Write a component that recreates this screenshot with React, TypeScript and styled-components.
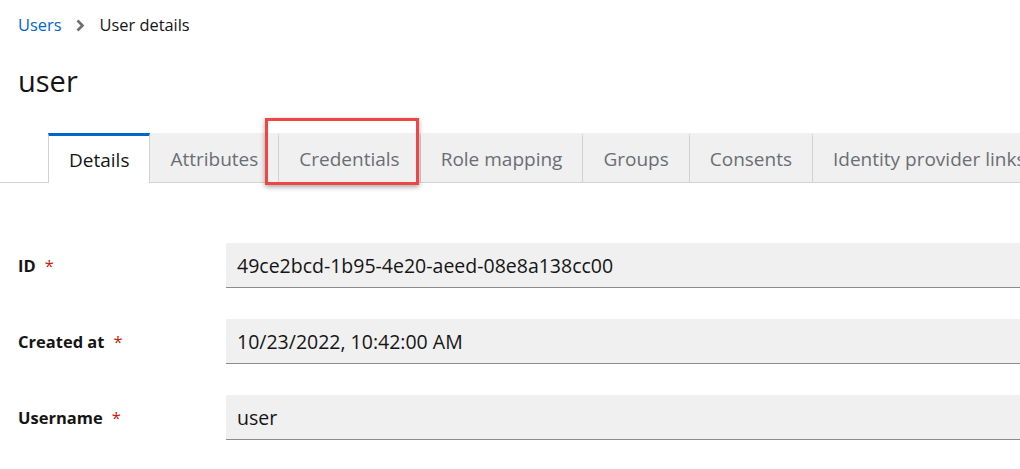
import React from "react";
import styled, { createGlobalStyle } from "styled-components";

const Global = createGlobalStyle`
  html, body { margin: 0; padding: 0; background: #fff; }
  body { font-family: "Open Sans", "Noto Sans", sans-serif; color: #151515; overflow: hidden; }
  * { box-sizing: border-box; }
`;

const Page = styled.div`
  width: 1020px;
  height: 469px;
  overflow: hidden;
`;

const Header = styled.div`
  padding: 12px 18px 0;
`;

const Breadcrumb = styled.nav`
  display: flex;
  align-items: center;
  font-size: 16.4px;
  line-height: 26px;
`;

const Crumb = styled.a`
  color: #0066cc;
  text-decoration: none;
`;

const Sep = styled.span`
  display: inline-flex;
  margin: 0 14px 0 15px;
  color: #6a6e73;
`;

const Current = styled.span`
  color: #151515;
`;

const Title = styled.h1`
  margin: 24px 0 0;
  font-size: 29px;
  font-weight: 400;
  line-height: 38px;
`;

const TabBar = styled.div`
  margin-top: 33px;
  display: flex;
  padding-left: 48px;
  border-bottom: 1px solid #d2d2d2;
  height: 50px;
  white-space: nowrap;
`;

const Tab = styled.div<{ $active?: boolean }>`
  position: relative;
  display: flex;
  align-items: center;
  padding: 0 20px;
  font-size: 19px;
  height: ${(p) => (p.$active ? "50px" : "49px")};
  background: ${(p) => (p.$active ? "#fff" : "#f0f0f0")};
  color: ${(p) => (p.$active ? "#151515" : "#6a6e73")};
  border-top: 3px solid ${(p) => (p.$active ? "#0066cc" : "#f0f0f0")};
  border-left: ${(p) => (p.$active ? "1px solid #d2d2d2" : "none")};
  border-right: 1px solid #d2d2d2;
  flex-shrink: 0;
`;

const Highlight = styled.div`
  position: absolute;
  left: -14px;
  right: 1px;
  top: -18px;
  bottom: -3px;
  border: 3px solid #f04545;
  box-shadow: 0 2px 5px rgba(0, 0, 0, 0.35);
  pointer-events: none;
`;

const Form = styled.div`
  margin-top: 60px;
  display: grid;
  grid-template-columns: 208px 1fr;
  row-gap: 31px;
  padding-left: 18px;
`;

const Label = styled.label`
  display: flex;
  align-items: center;
  font-size: 16.5px;
  font-weight: 700;
  color: #151515;
`;

const Req = styled.span`
  color: #c9190b;
  margin-left: 9px;
  font-weight: 400;
`;

const Field = styled.div`
  height: 45px;
  background: #f0f0f0;
  border-bottom: 1.5px solid #8a8d90;
  display: flex;
  align-items: center;
  padding: 0 11px;
  font-size: 19.5px;
  color: #151515;
`;

const Chevron = () => (
  <svg width="9" height="13" viewBox="0 0 9 13">
    <path d="M1.5 1.5 L6.5 6.5 L1.5 11.5" fill="none" stroke="#6a6e73" strokeWidth="2.6" />
  </svg>
);

const tabs = ["Details", "Attributes", "Credentials", "Role mapping", "Groups", "Consents", "Identity provider links"];

const fields = [
  ["ID", "49ce2bcd-1b95-4e20-aeed-08e8a138cc00"],
  ["Created at", "10/23/2022, 10:42:00 AM"],
  ["Username", "user"],
];

export default function App() {
  return (
    <Page>
      <Global />
      <Header>
        <Breadcrumb>
          <Crumb href="#">Users</Crumb>
          <Sep>
            <Chevron />
          </Sep>
          <Current>User details</Current>
        </Breadcrumb>
        <Title>user</Title>
      </Header>
      <TabBar>
        {tabs.map((t, i) => (
          <Tab key={t} $active={i === 0}>
            {t}
            {t === "Credentials" && <Highlight />}
          </Tab>
        ))}
      </TabBar>
      <Form>
        {fields.map(([l, v]) => (
          <React.Fragment key={l}>
            <Label>
              {l}
              <Req>*</Req>
            </Label>
            <Field>{v}</Field>
          </React.Fragment>
        ))}
      </Form>
    </Page>
  );
}
